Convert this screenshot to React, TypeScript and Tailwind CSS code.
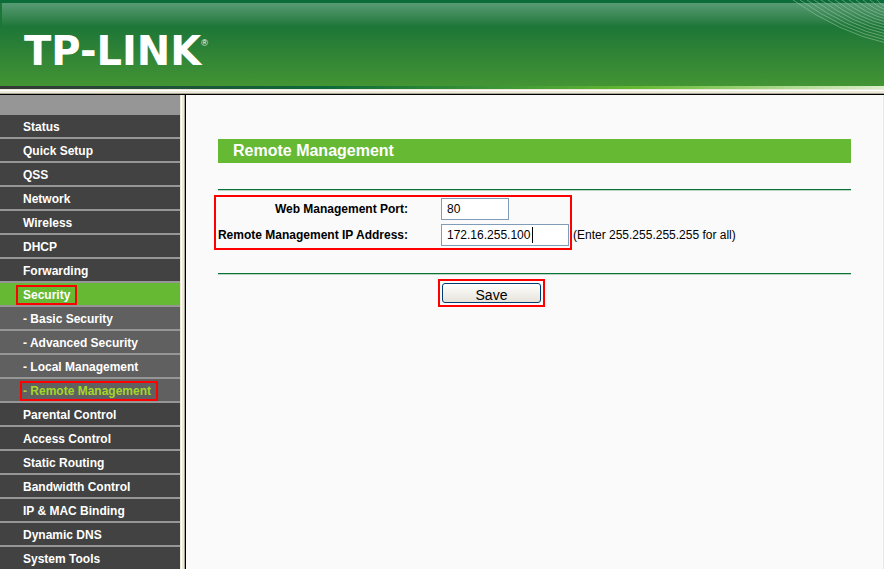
import React from "react";

type MenuItem = {
  label: string;
  kind?: "sub" | "active";
  current?: boolean;
  marked?: boolean;
};

const menuItems: MenuItem[] = [
  { label: "Status" },
  { label: "Quick Setup" },
  { label: "QSS" },
  { label: "Network" },
  { label: "Wireless" },
  { label: "DHCP" },
  { label: "Forwarding" },
  { label: "Security", kind: "active", marked: true },
  { label: "- Basic Security", kind: "sub" },
  { label: "- Advanced Security", kind: "sub" },
  { label: "- Local Management", kind: "sub" },
  { label: "- Remote Management", kind: "sub", current: true, marked: true },
  { label: "Parental Control" },
  { label: "Access Control" },
  { label: "Static Routing" },
  { label: "Bandwidth Control" },
  { label: "IP & MAC Binding" },
  { label: "Dynamic DNS" },
  { label: "System Tools" },
];

// fan of thin curves in the banner's right corner: start x and end y of each
const waves = Array.from({ length: 13 }, (_, i) => ({
  start: 3 + i * 7,
  end: 43 - i * 3,
}));

function Banner() {
  return (
    <header className="shrink-0">
      <div className="relative border-t-3 border-[#0b6b39] bg-linear-to-b from-[#1c7637] from-28% to-[#439433]">
        <div className="absolute inset-x-0 top-0 ml-0.5 h-6 bg-linear-to-b from-[#579b75] to-[#1c7637]" />
        <svg
          className="absolute -top-[3px] right-0 h-[44px] w-[94px]"
          viewBox="0 0 94 44"
          fill="none"
          stroke="#a5d0b0"
          strokeOpacity="0.5"
          aria-hidden="true"
        >
          {waves.map(({ start, end }) => (
            <path
              key={start}
              d={`M${start} 0 Q${(start + 96) / 2} ${end * 0.76} 96 ${end}`}
            />
          ))}
        </svg>
        <div className="relative flex h-[83px] items-center pt-3 pl-6 text-white">
          <span className="font-['DejaVu_Sans',sans-serif] text-[40px] leading-10 font-bold">
            TP-LINK
          </span>
          <span className="mb-4 font-['Liberation_Sans',Arial,sans-serif] text-[9px] leading-3">
            ®
          </span>
        </div>
      </div>
      <div className="h-[3px] bg-[linear-gradient(to_right,#363636,#0b6b39_37%,#66b932_72%,#dcedcb)]" />
      <div className="h-px bg-[#ece9d8]" />
      <div className="h-px bg-white" />
      <div className="h-0.5 bg-[#ece9d8]" />
      <div className="h-px bg-[#aca899]" />
      <div className="h-px bg-black" />
    </header>
  );
}

function MenuLink({ item }: { item: MenuItem }) {
  const background =
    item.kind === "active"
      ? "bg-[#66b932]"
      : item.kind === "sub"
        ? "bg-[#606060]"
        : "bg-[#424242]";

  return (
    <li className="border-b-2 border-[#969696]">
      <a
        href="#"
        aria-current={item.current ? "page" : undefined}
        className={`block h-[22px] pl-[23px] leading-6 ${background} ${item.current ? "text-[#a2d729]" : "text-white"}`}
      >
        <span className="relative inline-block">
          {item.label}
          {item.marked && (
            <span
              className={`absolute top-0.5 -right-[7px] h-5 border-2 border-[#f00] ${item.kind === "sub" ? "-left-[3px]" : "-left-[7px]"}`}
            />
          )}
        </span>
      </a>
    </li>
  );
}

function Sidebar() {
  return (
    <div className="flex shrink-0">
      <nav className="w-[180px] bg-[#969696] pt-5 text-[12px] font-bold" aria-label="Main menu">
        <ul>
          {menuItems.map((item) => (
            <MenuLink key={item.label} item={item} />
          ))}
        </ul>
      </nav>
      <div className="w-px bg-[#ece9d8]" />
      <div className="w-px bg-white" />
      <div className="w-0.5 bg-[#ece9d8]" />
      <div className="w-px bg-[#aca899]" />
      <div className="w-px bg-black" />
    </div>
  );
}

function Rule() {
  return <div className="h-0.5 border-t border-[#0c7134] bg-[#b9d6c4]" />;
}

function RemoteManagement() {
  return (
    <main className="min-w-0 flex-1 border-r border-[#ece9d8] bg-[#fafafa] px-8 pt-11">
      <h1 className="h-6 bg-[#66b932] pl-[15px] text-[16px] leading-6 font-bold text-white">
        Remote Management
      </h1>
      <form className="pt-[26px]" onSubmit={(event) => event.preventDefault()}>
        <Rule />
        <div className="relative grid grid-cols-[190px_1fr] items-center gap-x-[33px] gap-y-1 pt-[7px] text-[12px]">
          <span className="pointer-events-none absolute top-1 -left-1 h-[55px] w-[358px] border-2 border-[#f00]" />
          <label htmlFor="port" className="text-right font-bold whitespace-nowrap">
            Web Management Port:
          </label>
          <div>
            <input
              id="port"
              type="text"
              defaultValue="80"
              className="block h-[22px] w-[68px] border border-[#7f9db9] bg-white px-[5px]"
            />
          </div>
          <label
            htmlFor="address"
            className="flex justify-end font-bold whitespace-nowrap"
          >
            Remote Management IP Address:
          </label>
          <div className="flex items-center gap-1">
            <span className="relative flex items-center">
              <input
                id="address"
                type="text"
                defaultValue="172.16.255.100"
                className="block h-[22px] w-32 border border-[#7f9db9] bg-white px-[5px]"
              />
              <span className="absolute left-[91px] h-4 w-px bg-black" />
            </span>
            <span className="whitespace-nowrap">(Enter 255.255.255.255 for all)</span>
          </div>
        </div>
        <div className="pt-[27px]">
          <Rule />
        </div>
        <div className="mt-1 ml-[220px] w-[107px] border-2 border-[#f00] p-0.5">
          <button
            type="submit"
            className="block h-5 w-[99px] rounded-[3px] border border-[#003c74] bg-linear-to-b from-white to-[#e6e3da] text-[14px] leading-[22px]"
          >
            Save
          </button>
        </div>
      </form>
    </main>
  );
}

export default function App() {
  return (
    <div className="flex h-screen flex-col overflow-hidden font-['Liberation_Sans',Arial,sans-serif] text-black">
      <Banner />
      <div className="flex min-h-0 flex-1">
        <Sidebar />
        <RemoteManagement />
      </div>
    </div>
  );
}
